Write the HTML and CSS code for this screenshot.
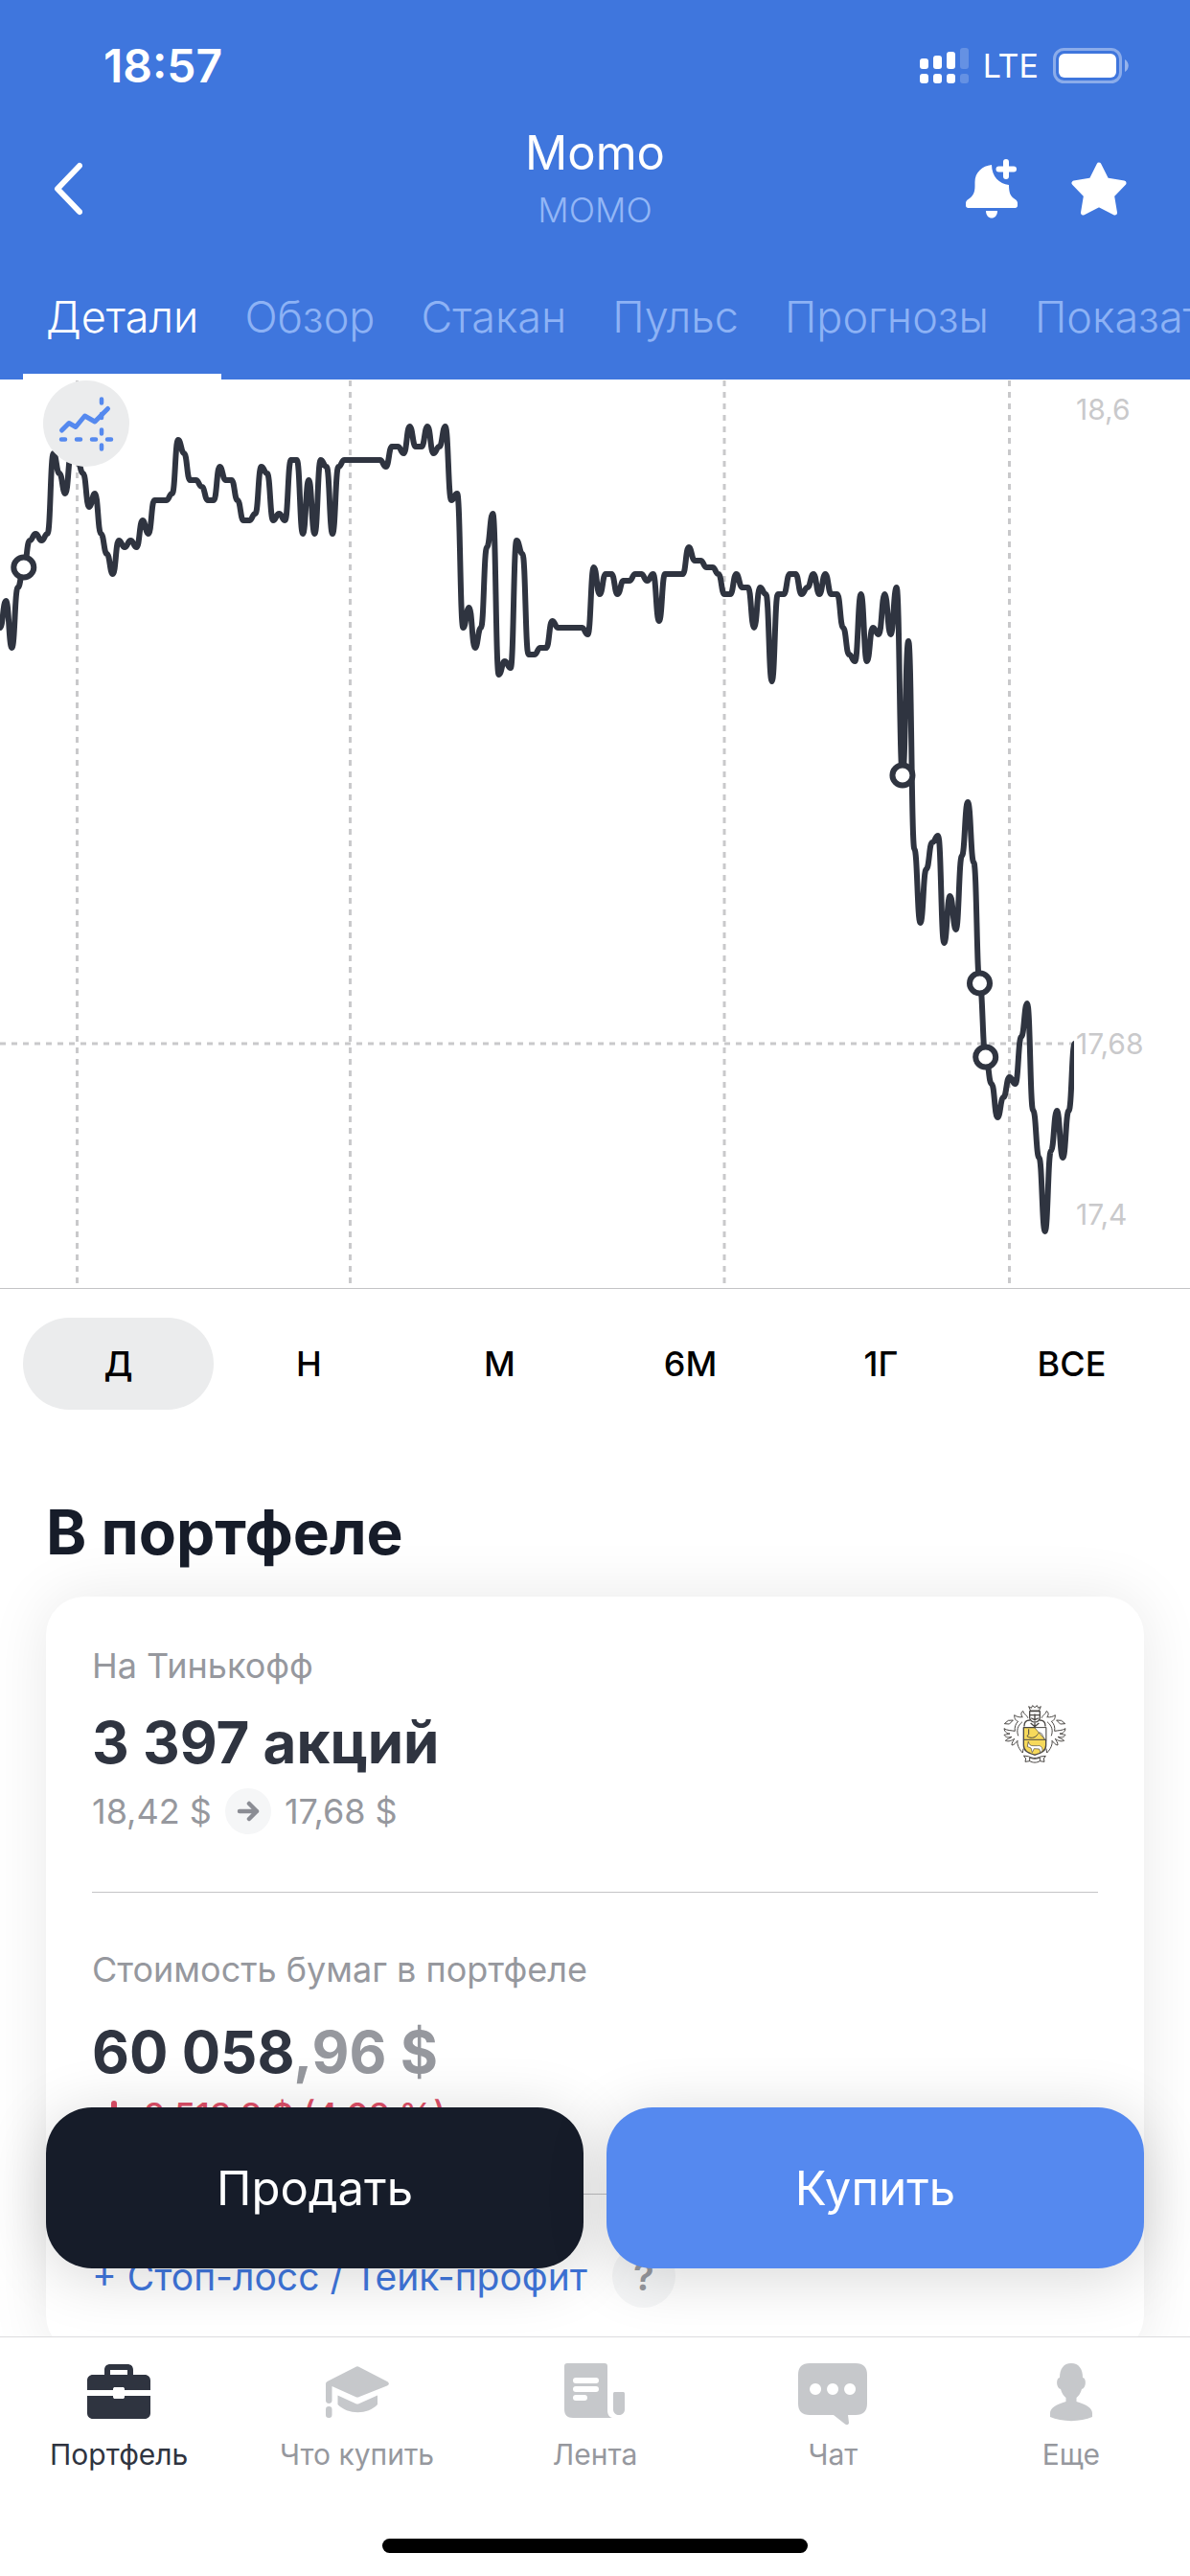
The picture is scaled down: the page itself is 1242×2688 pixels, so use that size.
FILE: index.html
```
<!DOCTYPE html>
<html lang="ru">
<head>
    <meta charset="UTF-8">
    <meta name="viewport" content="width=device-width, initial-scale=1.0">
    <title>Momo</title>
    <meta name="theme-color" content="#3f76dd">
    <link rel="stylesheet" href="styles.css">
</head>
<body>
    <div class="app">
        <header class="header">
            <div class="status-bar">
                <span class="time">18:57</span>
                <div class="status-icons">
                    <svg class="signal" width="51" height="38" viewBox="0 0 51 38" fill="#fff">
                        <rect x="0" y="11" width="9" height="11" rx="3"/>
                        <rect x="14" y="8" width="9" height="14" rx="3"/>
                        <rect x="28" y="4" width="9" height="18" rx="3"/>
                        <rect x="42" y="0" width="9" height="22" rx="3" opacity=".2"/>
                        <rect x="0" y="27" width="9" height="10" rx="3"/>
                        <rect x="14" y="27" width="9" height="10" rx="3"/>
                        <rect x="28" y="27" width="9" height="10" rx="3"/>
                        <rect x="42" y="27" width="9" height="10" rx="3" opacity=".2"/>
                    </svg>
                    <span class="network">LTE</span>
                    <svg width="80" height="38" viewBox="0 0 80 38" fill="#fff">
                        <rect x="1.5" y="1.5" width="69" height="34" rx="10" fill="none" stroke="#fff" stroke-width="3" opacity=".4"/>
                        <rect x="6" y="6" width="60" height="25" rx="6"/>
                        <path d="M75 12c5 3 5 10 0 13z" opacity=".45"/>
                    </svg>
                </div>
            </div>

            <div class="navbar">
                <button class="icon-btn" aria-label="Назад">
                    <svg width="30" height="56" viewBox="0 0 30 56" fill="none" stroke="#fff" stroke-width="6" stroke-linecap="round" stroke-linejoin="round">
                        <path d="M27 4L4 28l23 24"/>
                    </svg>
                </button>
                <div class="titles">
                    <h1 class="title">Momo</h1>
                    <div class="ticker">MOMO</div>
                </div>
                <div class="nav-actions">
                    <button class="icon-btn" aria-label="Уведомление о цене">
                        <svg width="54" height="62" viewBox="0 0 54 62" fill="#fff">
                            <path d="M27 6C17 7 9.500 14 9.500 24v4c0 7-2 11-7 14-1.500 1-2.500 2-2.500 4v2.500C0 50 1 51 2.500 51h49c1.500 0 2.500-1 2.500-2.500V46c0-2-1-3-2.500-4-5-3-6.500-7-6.500-15C35 26 27 18 27 6z"/>
                            <path d="M21 54h12c0 10-12 10-12 0z"/>
                            <path d="M42 3v15M34.500 10.500h15.500" stroke="#fff" stroke-width="6" stroke-linecap="round"/>
                        </svg>
                    </button>
                    <button class="icon-btn" aria-label="В избранное">
                        <svg width="58" height="56" viewBox="0 0 58 56" fill="#fff" stroke="#fff" stroke-width="5" stroke-linejoin="round">
                            <path d="M29 3l8 16 18 3-12.500 13 3 18L29 44.500 12.500 53l3-18L3 22l18-3z"/>
                        </svg>
                    </button>
                </div>
            </div>

            <nav class="tabs">
                <button class="tab active">Детали</button>
                <button class="tab">Обзор</button>
                <button class="tab">Стакан</button>
                <button class="tab">Пульс</button>
                <button class="tab">Прогнозы</button>
                <button class="tab">Показатели</button>
            </nav>
        </header>

        <main class="content">
            <div class="chart">
                <svg class="chart-svg" viewBox="0 0 1242 948">
                    <defs>
                        <clipPath id="plot"><rect width="1121" height="948"/></clipPath>
                    </defs>
                    <g class="grid">
                        <path d="M80.500 1V943"/>
                        <path d="M365.500 1V943"/>
                        <path d="M756 1V943"/>
                        <path d="M1053.500 1V943"/>
                        <path d="M0 693H1121"/>
                    </g>
                    <g clip-path="url(#plot)">
                        <path class="price-line" id="priceLine"/>
                    </g>
                    <g class="markers" id="markers"></g>
                    <g class="scale">
                        <text x="1123" y="42">18,6</text>
                        <text x="1123" y="704">17,68</text>
                        <text x="1123" y="882">17,4</text>
                    </g>
                </svg>
                <button class="chart-mode" aria-label="Режим графика">
                    <svg width="90" height="90" viewBox="0 0 90 90" fill="none" stroke="#5589ef" stroke-width="4.500" stroke-linecap="round">
                        <path d="M19.500 52l7.500-7.500 7 4L43.500 37 54 43l13.500-13.500" stroke-linejoin="round" stroke-width="5"/>
                        <path d="M19 61.500h4M35 61.500h4M51 61.500h4M67 61.500h4"/>
                        <path d="M61 19.500v4M61 35v4M61 51.500v4M61 67.500v4"/>
                    </svg>
                </button>
            </div>

            <div class="periods">
                <button class="period active">Д</button>
                <button class="period">Н</button>
                <button class="period">М</button>
                <button class="period">6М</button>
                <button class="period">1Г</button>
                <button class="period">ВСЕ</button>
            </div>

            <h2 class="section-title">В портфеле</h2>

            <section class="card">
                <div class="card-block holding">
                    <div>
                        <div class="label">На Тинькофф</div>
                        <div class="value">3 397 акций</div>
                        <div class="prices">
                            <span>18,42 $</span>
                            <svg width="48" height="48" viewBox="0 0 48 48" fill="none" stroke="#8b8d94" stroke-width="4.500" stroke-linecap="round" stroke-linejoin="round">
                                <circle cx="24" cy="24" r="24" fill="#f5f6f7" stroke="none"/>
                                <path d="M15 24h18M25 16l8 8-8 8"/>
                            </svg>
                            <span>17,68 $</span>
                        </div>
                    </div>
                    <svg class="crest" width="68" height="62" viewBox="138 117 204 186" fill="none" stroke="#4a4744" stroke-width="4" stroke-linejoin="round" stroke-linecap="round">
                        <path d="M205 191h70v55c0 20-15 24-35 31-20-7-35-11-35-31z" fill="#f6d95b"/>
                        <path d="M240 191h35v40z" fill="#fff" stroke-width="2"/>
                        <path d="M205 229h70" stroke-width="3"/>
                        <path d="M221 197v15l-5 6c10 8 24 6 30-2" stroke-width="3"/>
                        <path d="M246 216l8-10 8 4 8 16" stroke-width="2"/>
                        <path d="M220 236c2 8 6 12 14 12h14c10-2 16 4 16 14l-6 8-4-12-16-1-6 12-4-14-10-4z" fill="#fff" stroke-width="2"/>
                        <path d="M224 140h32v20c0 8-8 14-16 14s-16-6-16-14z" fill="#fff"/>
                        <path d="M226 152h11M243 152h11M240 150v18M230 162l10 5 10-5"/>
                        <path d="M226 137l-5-12 8 5 4-8 7 6 7-6 4 8 8-5-5 12z" fill="#fff" stroke-width="3"/>
                        <path d="M224 168c-12 0-17 8-17 18M256 168c12 0 17 8 17 18M228 178l12 10 12-10M240 178v12"/>
                        <path d="M218 160c-4-12-12-8-14-20-8 0-8 14-2 18-12 2-20-2-26-6 0 14 6 18 12 20-8 6-12 18-10 30-12-2-26-2-34-8 2 12 10 16 18 16-6 4-14 2-18 4 6 10 16 8 24 6-8 6-14 6-20 12 10 4 20 0 28-6-4 8-8 12-8 20 8 0 12-8 18-14-2 12 4 26 16 38l2-12" stroke-width="3"/>
                        <path d="M262 160c4-12 12-8 14-20 8 0 8 14 2 18 12 2 20-2 26-6 0 14-6 18-12 20 8 6 12 18 10 30 12-2 26-2 34-8-2 12-10 16-18 16 6 4 14 2 18 4-6 10-16 8-24 6 8 6 14 6 20 12-10 4-20 0-28-6 4 8 8 12 8 20-8 0-12-8-18-14 2 12-4 26-16 38l-2-12" stroke-width="3"/>
                        <path d="M200 174c-14 12-18 26-12 42M280 174c14 12 18 26 12 42M171 168l-14 1-12 10 14 1zM309 168l14 1 12 10-14 1z" stroke-width="3"/>
                        <path d="M206 280l6 8-2 10 14-2v-11c10 5 22 5 32 0v11l14 2-2-10 6-8-16 2c-12 6-24 6-36 0zM224 296c10 6 22 6 32 0" fill="#fff" stroke-width="3"/>
                    </svg>
                </div>

                <div class="card-block">
                    <div class="label">Стоимость бумаг в портфеле</div>
                    <div class="value total">60 058<span class="cents">,96 $</span></div>
                    <div class="change">
                        <svg width="46" height="36" viewBox="0 0 46 36" fill="none" stroke="#dd4f68" stroke-width="6" stroke-linecap="round" stroke-linejoin="round">
                            <path d="M23 6v23M13 20l10 10 10-10"/>
                        </svg>
                        <span>2 513,8 $ (4,02 %)</span>
                    </div>
                </div>

                <div class="card-block orders">
                    <a class="orders-link" href="#">+ Стоп-лосс / Тейк-профит</a>
                    <button class="help">?</button>
                </div>
            </section>

            <div class="actions">
                <button class="action sell">Продать</button>
                <button class="action buy">Купить</button>
            </div>
        </main>

        <footer class="tabbar">
            <nav class="tabbar-items">
                <a class="tabbar-item active" href="#">
                    <svg width="66" height="66" viewBox="0 0 66 66">
                        <path fill-rule="evenodd" d="M0 28V18c0-3.500 2.500-6 6-6h12V7c0-4 2.500-6 6-6h18c3.500 0 6 2 6 6v5h12c3.500 0 6 2.500 6 6v10H39v-1c0-1.500-1-2-2-2h-8c-1 0-2 .5-2 2v1zM24 12h18V7H24zM0 34h27v1c0 1.500 1 2 2 2h8c1 0 2-.5 2-2v-1h27v18c0 3.500-2.500 6-6 6H6c-3.500 0-6-2.500-6-6z"/>
                    </svg>
                    <span>Портфель</span>
                </a>
                <a class="tabbar-item" href="#">
                    <svg width="66" height="66" viewBox="0 0 66 66">
                        <path d="M31 4c1.500-1 2.500-1 4 0l29 15c2.500 1.500 2.500 3 0 4.500L35 35c-1.500.7-2.500.7-4 0L6.500 24v15c0 4-6.500 4-6.500 0V22c0-2 .5-2.500 2.500-3.500z"/>
                        <path d="M12.500 33.500L31 42c1.500.7 2.500.7 4 0l19-8.500V43c-10 11-31 11-41.500 0z"/>
                        <rect x="0" y="45" width="6.500" height="12" rx="3.200"/>
                    </svg>
                    <span>Что купить</span>
                </a>
                <a class="tabbar-item" href="#">
                    <svg width="64" height="66" viewBox="0 0 64 66">
                        <path fill-rule="evenodd" d="M3 0h39c2 0 3 1 3 3v46c0 4 1.500 7 5 8H9c-6 0-9-3-9-9V3c0-2 1-3 3-3zM12 15a3 3 0 0 0 0 6h21a3 3 0 0 0 0-6zM12 24a3 3 0 0 0 0 6h21a3 3 0 0 0 0-6zM12 33a3 3 0 0 0 0 6h9a3 3 0 0 0 0-6z"/>
                        <path d="M53 30h8c1.500 0 2 .5 2 2v16c0 8-12 8-12 0V32c0-1.500.5-2 2-2z"/>
                    </svg>
                    <span>Лента</span>
                </a>
                <a class="tabbar-item" href="#">
                    <svg width="72" height="66" viewBox="0 0 72 66">
                        <path fill-rule="evenodd" d="M12 0h48c8 0 12 4 12 12v30c0 8-4 12-12 12h-8l1 8c0 2-2 3-4 1.500L37 54H12C4 54 0 50 0 42V12C0 4 4 0 12 0zM18 21a6 6 0 1 0 .1 0zM36 21a6 6 0 1 0 .1 0zM54 21a6 6 0 1 0 .1 0z"/>
                    </svg>
                    <span>Чат</span>
                </a>
                <a class="tabbar-item" href="#">
                    <svg width="44" height="66" viewBox="0 0 44 66">
                        <path d="M22 0c8 0 12 6 12 15 4 0 4 11-1 12-1 4-3 7-5.500 9v4C38 43 44 47 44 52v4c-12 5.500-32 5.500-44 0v-4c0-5 6-9 16.500-12v-4C14 34 12 31 11 27c-5-1-5-12-1-12C10 6 14 0 22 0z"/>
                    </svg>
                    <span>Еще</span>
                </a>
            </nav>
            <div class="home-indicator"></div>
        </footer>
    </div>

    <script src="chart.js"></script>
</body>
</html>
```
FILE: styles.css
```
* {
    margin: 0;
    padding: 0;
    box-sizing: border-box;
}

body {
    font-family: Inter, Roboto, 'Liberation Sans', sans-serif;
    background: #fff;
    color: #2f3440;
}

button {
    font: inherit;
    color: inherit;
    background: none;
    border: none;
    cursor: pointer;
}

a {
    color: inherit;
    text-decoration: none;
}

svg {
    display: block;
    flex-shrink: 0;
}

.app {
    height: 100vh;
    display: flex;
    flex-direction: column;
    overflow: hidden;
}

/* Header */
.header {
    background: #3f76dd;
    color: #fff;
    flex-shrink: 0;
}

.status-bar {
    height: 129px;
    padding: 8px 63px 0 108px;
    display: flex;
    align-items: center;
    justify-content: space-between;
}

.time {
    font-size: 48px;
    font-weight: 600;
}

.status-icons {
    display: flex;
    align-items: center;
    gap: 15px;
}

.network {
    font-size: 34px;
    font-weight: 400;
}

.navbar {
    height: 136px;
    padding: 0 56px;
    display: grid;
    grid-template-columns: 1fr auto 1fr;
    align-items: center;
}

.icon-btn {
    justify-self: start;
}

.titles {
    align-self: start;
    text-align: center;
}

.title {
    font-size: 49px;
    font-weight: 400;
    line-height: 62px;
}

.ticker {
    font-size: 36px;
    font-weight: 300;
    line-height: 56px;
    color: #93b6f6;
}

.nav-actions {
    justify-self: end;
    display: flex;
    align-items: center;
    gap: 56px;
    padding-right: 10px;
}

.tabs {
    display: flex;
    padding-left: 24px;
    overflow: hidden;
}

.tab {
    flex-shrink: 0;
    padding: 0 24px;
    font-size: 45px;
    font-weight: 300;
    line-height: 131px;
    color: #8db2f5;
}

.tab.active {
    color: #fff;
    box-shadow: inset 0 -6px #fff;
}

/* Content */
.content {
    flex: 1;
    min-height: 0;
    position: relative;
    overflow: hidden;
}

.chart {
    position: relative;
    border-bottom: 1px solid #c4c4c6;
}

.chart-svg {
    width: 100%;
    height: auto;
}

.grid path {
    stroke: #c9c9cb;
    stroke-width: 3;
    stroke-dasharray: 6 6;
}

.price-line {
    fill: none;
    stroke: #2f3440;
    stroke-width: 6;
    stroke-linejoin: round;
}

.markers circle {
    fill: #fff;
    stroke: #2f3440;
    stroke-width: 6;
}

.scale text {
    font-size: 30px;
    fill: #c9c9cb;
}

.chart-mode {
    position: absolute;
    top: 1px;
    left: 45px;
    border-radius: 50%;
    background: #ebeced;
}

.periods {
    display: flex;
    padding: 30px 24px;
}

.period {
    flex: 1;
    font-size: 36px;
    font-weight: 500;
    line-height: 96px;
    border-radius: 48px;
    color: #000;
}

.period.active {
    background: #ebeced;
}

.section-title {
    padding: 60px 48px 29px;
    font-size: 64px;
    font-weight: 700;
    line-height: 76px;
    color: #161c29;
}

.card {
    margin: 0 48px;
    padding: 0 48px;
    border-radius: 40px;
    background: #fff;
    box-shadow: 0 0 64px rgba(0, 0, 0, 0.09);
}

.card-block {
    padding: 58px 0 60px;
    border-bottom: 1px solid #c4c4c6;
}

.holding {
    display: flex;
    align-items: center;
    justify-content: space-between;
    padding: 50px 32px 60px 0;
}

.crest {
    margin-bottom: 12px;
}

.label {
    font-size: 36px;
    line-height: 44px;
    color: #96989e;
}

.value {
    margin-top: 22px;
    font-size: 60px;
    font-weight: 700;
    line-height: 72px;
}

.total {
    margin-top: 28px;
}

.cents {
    color: #96989e;
}

.prices {
    margin-top: 12px;
    display: flex;
    align-items: center;
    gap: 14px;
    font-size: 36px;
    color: #96989e;
}

.change {
    margin-top: 8px;
    display: flex;
    align-items: center;
    gap: 8px;
    font-size: 36px;
    font-weight: 500;
    line-height: 44px;
    color: #dd4f68;
}

.orders {
    padding: 52px 0 48px;
    display: flex;
    align-items: center;
    gap: 26px;
    border-bottom: none;
}

.orders-link {
    font-size: 39px;
    color: #3f76dd;
}

.help {
    width: 66px;
    height: 66px;
    border-radius: 50%;
    background: #f5f6f7;
    font-size: 40px;
    font-weight: 600;
    color: #96989e;
}

/* Trade buttons float over the card */
.actions {
    position: absolute;
    left: 48px;
    right: 48px;
    bottom: 71px;
    display: flex;
    gap: 24px;
}

.action {
    flex: 1;
    height: 168px;
    border-radius: 48px;
    font-size: 49px;
    color: #fff;
    box-shadow: 0 8px 64px rgba(0, 0, 0, 0.16);
}

.sell {
    background: #161c29;
}

.buy {
    background: #5589ef;
}

/* Bottom navigation */
.tabbar {
    flex-shrink: 0;
    padding: 27px 0 24px;
    border-top: 1px solid #dcdcde;
    background: #fff;
}

.tabbar-items {
    display: flex;
}

.tabbar-item {
    flex: 1;
    display: flex;
    flex-direction: column;
    align-items: center;
    gap: 11px;
    font-size: 30px;
    line-height: 36px;
    color: #96989e;
}

.tabbar-item svg {
    fill: #c6c8cb;
}

.tabbar-item.active {
    color: #2f3440;
}

.tabbar-item.active svg {
    fill: #2f3440;
}

.home-indicator {
    width: 444px;
    max-width: 60%;
    height: 15px;
    margin: 70px auto 0;
    border-radius: 8px;
    background: #000;
}
```
FILE: chart.js
```
// Price of each point, in cents below 18,55
const points = [
    25, 21, 28, 19, 16, 12, 11, 12, 11, -1, 2, 5, -1, 0, 2, 7, 5, 11, 14, 17,
    12, 13, 12, 13, 9, 11, 6, 6, 6, 5, -3, -1, 3, 3, 4, 6, 6, 1, 3, 3,
    6, 9, 9, 8, 1, 2, 9, 8, 9, 0, 0, 11, 3, 11, 0, 1, 11, 1, 0, 0,
    0, 0, 0, 0, 0, 1, -2, -2, -1, -5, -2, -2, -5, -1, -2, -5, 6, 5, 25, 22,
    28, 25, 13, 8, 32, 30, 31, 12, 14, 29, 29, 28, 28, 24, 25, 25, 25, 25, 25, 26,
    16, 20, 17, 17, 20, 18, 18, 17, 17, 18, 17, 24, 17, 17, 17, 17, 13, 15, 15, 16,
    16, 17, 20, 20, 17, 19, 19, 25, 19, 20, 33, 20, 20, 17, 17, 20, 19, 17, 20, 17,
    20, 20, 25, 29, 30, 20, 30, 25, 26, 20, 26, 19, 47, 27, 58, 69, 61, 57, 56, 72,
    65, 70, 59, 51, 60, 78, 89, 93, 98, 95, 92, 93, 86, 81, 97, 104, 115, 103, 97, 104,
    97, 87
]

// Indexes of the points with a deal
const deals = [4, 152, 165, 166]

const STEP = 6.197
const CENT = 7
const TOP = 84

const x = i => i * STEP
const y = i => TOP + points[i] * CENT

let d = `M0 ${y(0)}`
for (let i = 1; i < points.length; i++) {
    const mid = (x(i - 1) + x(i)) / 2
    d += `C${mid} ${y(i - 1)} ${mid} ${y(i)} ${x(i)} ${y(i)}`
}
document.getElementById('priceLine').setAttribute('d', d)

const markers = document.getElementById('markers')
deals.forEach(i => {
    const circle = document.createElementNS('http://www.w3.org/2000/svg', 'circle')
    circle.setAttribute('cx', x(i))
    circle.setAttribute('cy', y(i))
    circle.setAttribute('r', 10.5)
    markers.appendChild(circle)
})
```
